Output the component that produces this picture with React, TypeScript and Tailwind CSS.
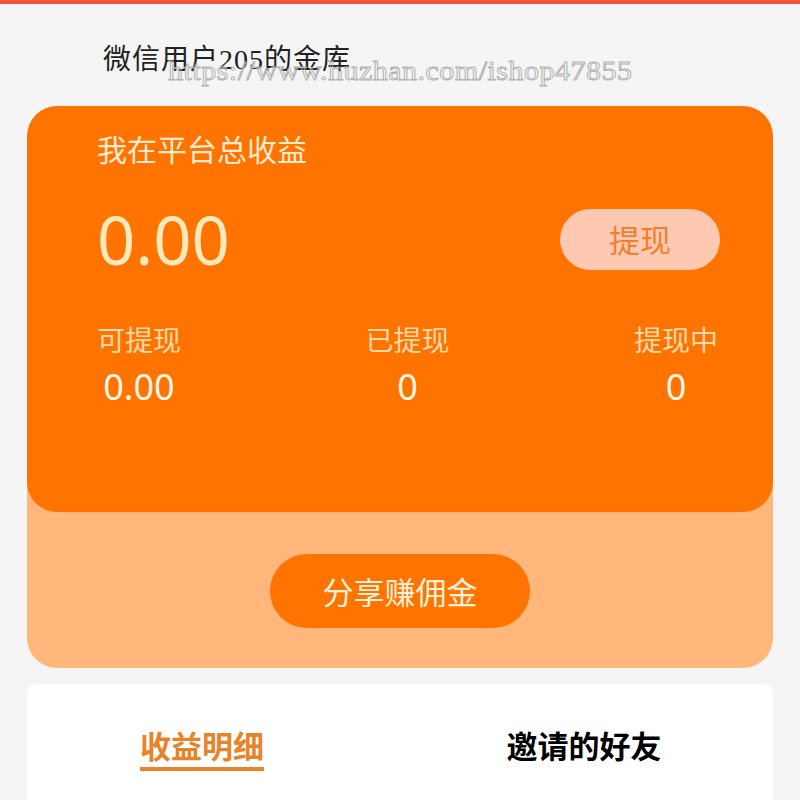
import React, { useState } from "react";

const stats = [
  { label: "可提现", value: "0.00" },
  { label: "已提现", value: "0" },
  { label: "提现中", value: "0" },
];

const App = () => {
  const [tab, setTab] = useState(0);

  return (
    <div className="w-[800px] h-[800px] overflow-hidden bg-[#f5f5f5] font-['Noto_Sans_CJK_SC','Noto_Sans',sans-serif]">
      {/* top bar */}
      <div className="h-[4px] bg-[#f5523f]" />

      {/* header */}
      <div className="relative h-[102px] pl-[103px] pt-[38px]">
        <h1 className="text-[28px] leading-[36px] text-[#222] font-['Liberation_Serif','Noto_Sans_CJK_SC',serif] tracking-[1px]">
          微信用户205的金库
        </h1>
        <span className="absolute left-[168px] top-[50px] text-[30px] leading-[34px] text-transparent font-['Liberation_Serif',serif] [-webkit-text-stroke:1px_#b0b0b0] tracking-[0.5px] scale-y-[0.9] origin-left">
          https://www.huzhan.com/ishop47855
        </span>
      </div>

      {/* earnings card */}
      <div className="mx-[27px] rounded-[30px] bg-[#ffb77c] overflow-hidden">
        <div className="rounded-[30px] bg-[#ff7300] h-[406px] px-[70px] pt-[23px]">
          <p className="text-[30px] leading-[38px] text-[#ffeccf]">我在平台总收益</p>

          <div className="flex items-center justify-between mt-[34px]">
            <span className="text-[67px] leading-[76px] text-[#ffe9b8] font-['Noto_Sans',sans-serif]">0.00</span>
            <button className="w-[160px] h-[61px] -mr-[17px] rounded-full bg-[#ffc8b0] text-[31px] text-[#f08030]">
              提现
            </button>
          </div>

          <div className="flex justify-between mt-[44px] -mr-[15px]">
            {stats.map((s) => (
              <div key={s.label} className="flex flex-col items-center">
                <span className="text-[28px] leading-[36px] text-[#ffd9a6]">{s.label}</span>
                <span className="text-[36px] leading-[46px] mt-[7px] text-[#fff6e4] font-['Noto_Sans',sans-serif]">
                  {s.value}
                </span>
              </div>
            ))}
          </div>
        </div>

        <div className="flex justify-center pt-[42px] pb-[40px]">
          <button className="w-[260px] h-[74px] rounded-full bg-[#ff7300] text-[31px] text-[#fff1d8]">
            分享赚佣金
          </button>
        </div>
      </div>

      {/* tabs */}
      <div className="mx-[27px] mt-[16px] rounded-[10px] bg-white h-[140px] flex">
        {["收益明细", "邀请的好友"].map((t, i) => (
          <button
            key={t}
            onClick={() => setTab(i)}
            className={"flex-1 flex justify-center pt-[41px] " + (i === 0 ? "pr-[32px]" : "pr-[14px]")}
          >
            <span
              className={
                "text-[31px] leading-[40px] font-bold " +
                (tab === i
                  ? "text-[#e8832a] border-b-[4px] border-[#e8832a] h-[46px]"
                  : "text-black")
              }
            >
              {t}
            </span>
          </button>
        ))}
      </div>
    </div>
  );
};

export default App;
